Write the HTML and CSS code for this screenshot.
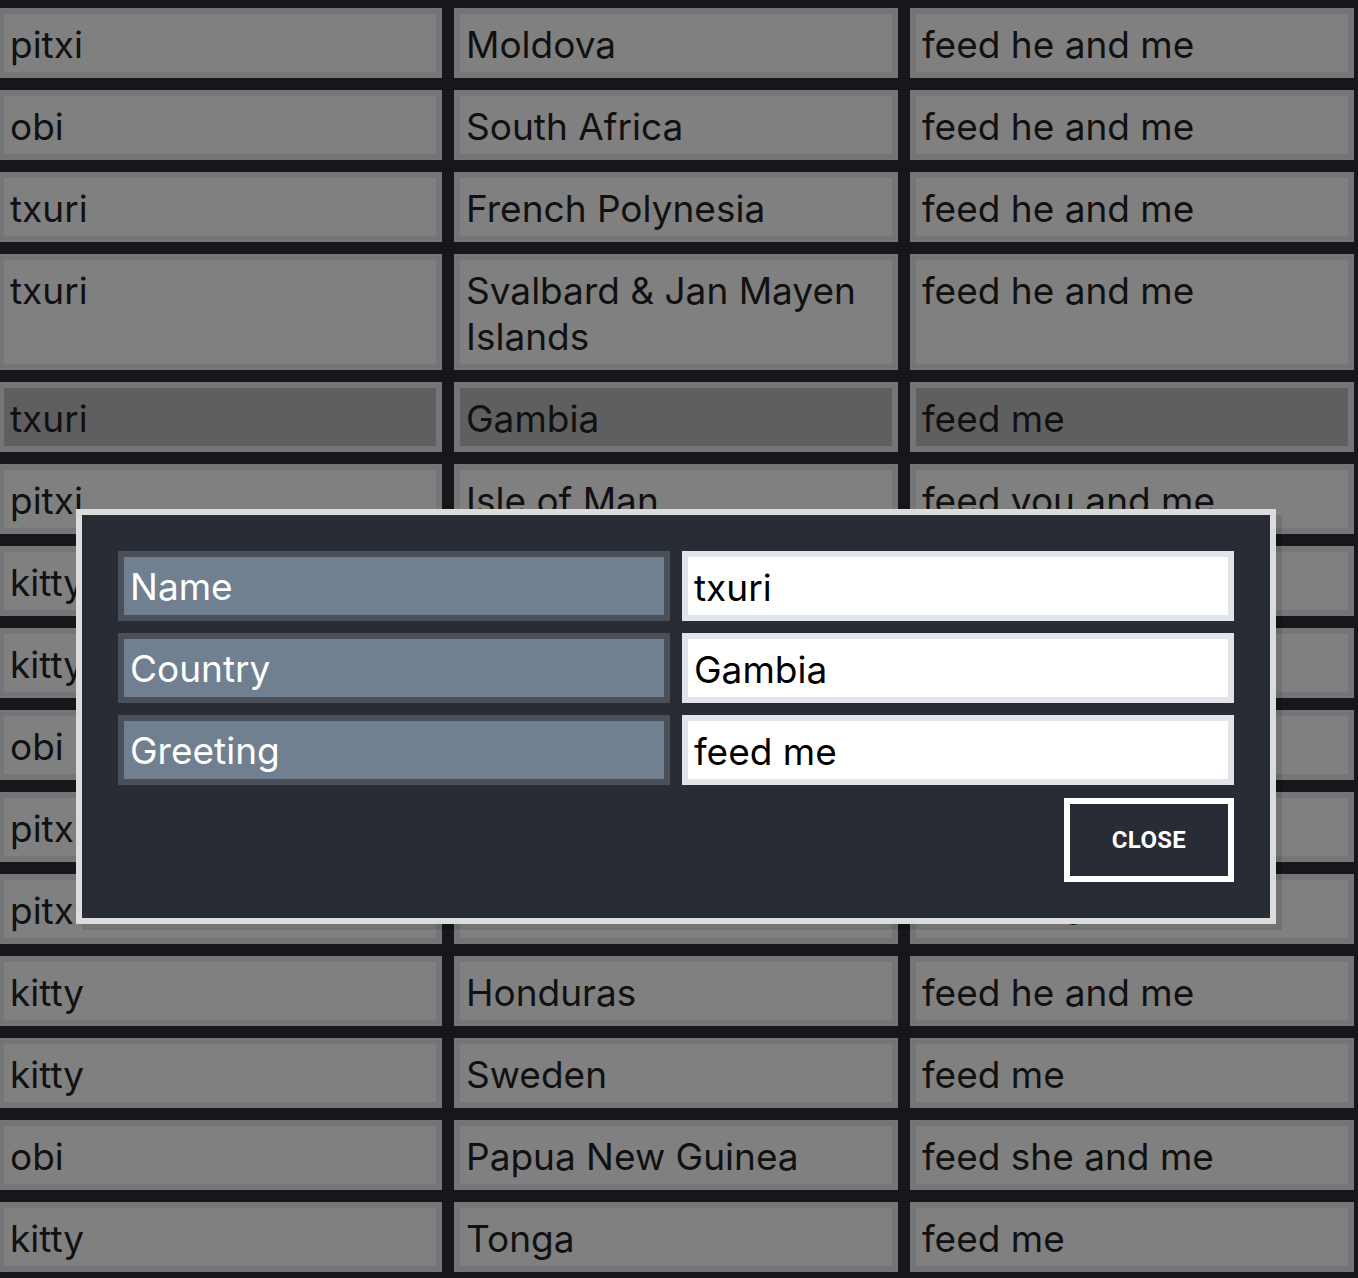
FILE: index.html
```html
<!DOCTYPE html>
<html lang="en">
<head>
<meta charset="utf-8">
<title>Greetings</title>
<link rel="stylesheet" href="styles.css">
</head>
<body>
<div class="grid">
  <div class="cell">pitxi</div><div class="cell">Moldova</div><div class="cell">feed he and me</div>
  <div class="cell">obi</div><div class="cell">South Africa</div><div class="cell">feed he and me</div>
  <div class="cell">txuri</div><div class="cell">French Polynesia</div><div class="cell">feed he and me</div>
  <div class="cell">txuri</div><div class="cell">Svalbard &amp; Jan Mayen Islands</div><div class="cell">feed he and me</div>
  <div class="cell sel">txuri</div><div class="cell sel">Gambia</div><div class="cell sel">feed me</div>
  <div class="cell">pitxi</div><div class="cell">Isle of Man</div><div class="cell">feed you and me</div>
  <div class="cell">kitty</div><div class="cell">Chile</div><div class="cell">feed me</div>
  <div class="cell">kitty</div><div class="cell">Norway</div><div class="cell">feed he and me</div>
  <div class="cell">obi</div><div class="cell">Peru</div><div class="cell">feed me</div>
  <div class="cell">pitxi</div><div class="cell">Japan</div><div class="cell">feed me</div>
  <div class="cell">pitxi</div><div class="cell">Réunion</div><div class="cell">feed he and me</div>
  <div class="cell">kitty</div><div class="cell">Honduras</div><div class="cell">feed he and me</div>
  <div class="cell">kitty</div><div class="cell">Sweden</div><div class="cell">feed me</div>
  <div class="cell">obi</div><div class="cell">Papua New Guinea</div><div class="cell">feed she and me</div>
  <div class="cell">kitty</div><div class="cell">Tonga</div><div class="cell">feed me</div>
</div>

<div class="modal">
  <div class="form">
    <div class="label">Name</div><input class="field" type="text" value="txuri">
    <div class="label">Country</div><input class="field" type="text" value="Gambia">
    <div class="label">Greeting</div><input class="field" type="text" value="feed me">
  </div>
  <div class="actions">
    <button class="close" type="button">Close</button>
  </div>
</div>
</body>
</html>
```

FILE: styles.css
```css
* { box-sizing: border-box; }

html, body {
  margin: 0;
  padding: 0;
  background: #16171b;
  height: 1278px;
  overflow: hidden;
}

body {
  font-family: Inter, "Noto Sans", sans-serif;
  font-size: 37px;
  line-height: 46px;
  color: #111;
}

.grid {
  display: grid;
  grid-template-columns: 444px 444px 444px;
  gap: 12px;
  margin: 8px 0 0 -2px;
}

.cell {
  background: #808080;
  border: 6px solid #747577;
  padding: 8px 6px 4px 6px;
  min-height: 70px;
}

.cell.sel {
  background: #5f5f5f;
}

.modal {
  position: absolute;
  left: 76px;
  top: 509px;
  width: 1200px;
  background: #282c34;
  border: 6px solid #dcdcdc;
  padding: 36px;
  box-shadow: 6px 6px 0 rgba(0, 0, 0, 0.1);
}

.form {
  display: grid;
  grid-template-columns: 552px 552px;
  gap: 12px;
}

.label {
  height: 70px;
  background: #708090;
  border: 6px solid #4a4f58;
  color: #fff;
  padding: 7px 6px 5px 6px;
}

.field {
  height: 70px;
  width: 100%;
  margin: 0;
  background: #fff;
  border: 6px solid #e1e5e9;
  color: #000;
  font: inherit;
  padding: 2px 6px 0 6px;
  outline: none;
}

.actions {
  display: flex;
  justify-content: flex-end;
  margin-top: 13px;
}

.close {
  width: 170px;
  height: 84px;
  background: #282c34;
  border: 6px solid #fff;
  color: #fff;
  font-family: Roboto, Inter, sans-serif;
  font-weight: 700;
  font-size: 24px;
  text-transform: uppercase;
  letter-spacing: 0.3px;
  padding: 0;
}
```
